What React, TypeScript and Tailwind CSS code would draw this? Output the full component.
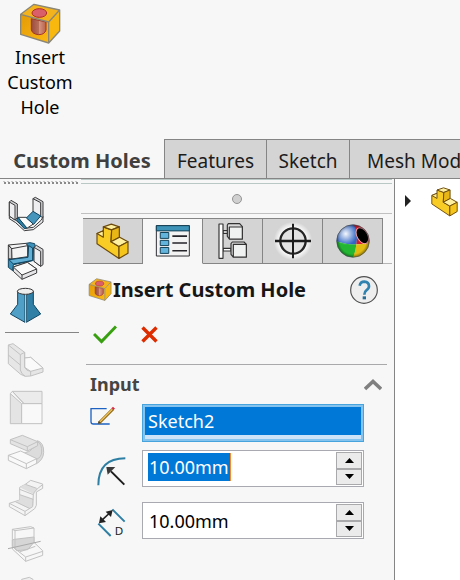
import type { ReactNode } from "react";

function HoleBlock({ className }: { className: string }) {
  return (
    <svg className={className} viewBox="57 9 126 123" aria-hidden="true">
      <defs>
        <linearGradient id="bore" x1="0" x2="1">
          <stop offset="0" stopColor="#9c4a3c" />
          <stop offset="0.5" stopColor="#b8705a" />
          <stop offset="0.5" stopColor="#d89a86" />
          <stop offset="1" stopColor="#b8604c" />
        </linearGradient>
        <linearGradient id="front" x1="0" x2="1" y1="0" y2="1">
          <stop offset="0" stopColor="#e39a06" />
          <stop offset="1" stopColor="#fdb913" />
        </linearGradient>
      </defs>
      <path d="M62 43 102 13 179 30 146 66Z" fill="#f3b31c" />
      <path d="M62 43 146 66V129L62 103Z" fill="url(#front)" />
      <path d="M146 66 179 30V93L146 129Z" fill="#f8b80e" />
      <path d="M94 56 138 66V90Q134 104 116 104 97 102 94 90Z" fill="url(#bore)" stroke="#a3332c" strokeWidth="3" />
      <ellipse cx="118" cy="39" rx="22" ry="13" fill="#d9606a" stroke="#b02a2a" strokeWidth="3" />
      <path d="M62 43 102 13 179 30V93L146 129 62 103ZL146 66 179 30M146 66V129" fill="none" stroke="#8a8678" strokeWidth="4" strokeLinejoin="round" />
    </svg>
  );
}

function PartIcon({ className }: { className: string }) {
  return (
    <svg className={className} viewBox="51 38 99 110" aria-hidden="true">
      <g stroke="#6b4a0c" strokeWidth="3.5" strokeLinejoin="round">
        <path d="M54 69 73 61V49L98 58 96 94 120 108V144L54 100Z" fill="#f9cb25" />
        <path d="M54 69 73 61V80Z" fill="#fff09a" />
        <path d="M73 49 97 41 121 49 98 58Z" fill="#fff0a0" />
        <path d="M98 58 121 49V80L96 94Z" fill="#e8b615" />
        <path d="M96 94 122 80 147 94 120 108Z" fill="#fff0a0" />
        <path d="M120 108 147 94V128L120 144Z" fill="#f6c51c" />
      </g>
    </svg>
  );
}

function PropertiesIcon() {
  return (
    <svg className="h-8 w-9" viewBox="224 44 108 98" aria-hidden="true">
      <path d="M227 46H328V139H227Z" fill="#f3f3f4" stroke="#2c2c30" strokeWidth="3" />
      <path d="M227 46H328V62H227Z" fill="#3e94b8" stroke="#123f55" strokeWidth="3" />
      <g fill="#63b4dc" stroke="#123f55" strokeWidth="3">
        <path d="M239 67H265V85H239ZM239 91H265V107H239ZM239 113H265V131H239Z" />
      </g>
      <path d="M276 78H321M276 99H321M276 123H321" stroke="#26262a" strokeWidth="5" />
    </svg>
  );
}

function ConfigIcon() {
  return (
    <svg className="h-9 w-[29px]" viewBox="415 40 87 108" aria-hidden="true">
      <g stroke="#333" strokeWidth="3.5" strokeLinejoin="round">
        <path d="M430 63H444V71H430ZM430 116H454V124H430Z" fill="#fff" />
        <path d="M418 43H430V146H418Z" fill="#fff" />
        <path d="M443 46 446 42H480L488 51V88H450L443 80Z" fill="#d9d9d9" />
        <path d="M449 52H488V88H449Z" fill="#f0f1f1" />
        <path d="M454 102 458 97H493L500 104V142H461L454 134Z" fill="#d9d9d9" />
        <path d="M461 104H500V142H461Z" fill="#f0f1f1" />
      </g>
    </svg>
  );
}

function TargetIcon() {
  return (
    <svg className="size-10" viewBox="129 31 120 120" aria-hidden="true">
      <defs>
        <radialGradient id="halo">
          <stop offset="0.7" stopColor="#fff" stopOpacity="0.9" />
          <stop offset="1" stopColor="#fff" stopOpacity="0" />
        </radialGradient>
      </defs>
      <circle cx="189" cy="91" r="58" fill="url(#halo)" />
      <circle cx="189" cy="91" r="38" fill="#e3e3e3" stroke="#252525" strokeWidth="7" />
      <path d="M135 91H243" stroke="#1c1c1c" strokeWidth="7" />
      <path d="M189 39V143" stroke="#1c1c1c" strokeWidth="6" />
    </svg>
  );
}

function AppearanceIcon() {
  return (
    <svg className="size-9" viewBox="316 37 108 108" aria-hidden="true">
      <defs>
        <clipPath id="ball">
          <circle cx="370" cy="91" r="49" />
        </clipPath>
        <radialGradient id="shine" cx="0.28" cy="0.28" r="0.35">
          <stop offset="0" stopColor="#fff" stopOpacity="0.95" />
          <stop offset="1" stopColor="#fff" stopOpacity="0" />
        </radialGradient>
        <radialGradient id="rim">
          <stop offset="0.8" stopColor="#000" stopOpacity="0" />
          <stop offset="1" stopColor="#000" stopOpacity="0.4" />
        </radialGradient>
      </defs>
      <g clipPath="url(#ball)">
        <path d="M316 37H374Q386 65 380 101 350 103 316 91Z" fill="#2f65c4" />
        <path d="M370 37H424V100H380Q386 65 370 37Z" fill="#d01c2c" />
        <path d="M316 90Q350 103 380 101 378 124 370 145H316Z" fill="#22b632" />
        <path d="M380 101Q405 101 424 90V145H368Q378 124 380 101Z" fill="#e2bb10" />
        <ellipse cx="398" cy="75" rx="16" ry="26" transform="rotate(-30 398 75)" fill="#000" stroke="#f5a0a8" strokeWidth="3" />
        <circle cx="370" cy="91" r="49" fill="url(#rim)" />
        <circle cx="370" cy="91" r="49" fill="url(#shine)" />
      </g>
      <circle cx="370" cy="91" r="49" fill="none" stroke="#444a50" strokeWidth="2" />
    </svg>
  );
}

type Tool = { label: string; box: string; art: ReactNode };

const activeTools: Tool[] = [
  {
    label: "Sketched bend",
    box: "18 42 120 120",
    art: (
      <g stroke="#3a3a3c" strokeWidth="3" strokeLinejoin="round">
        <path d="M28 108 48 121 75 145 100 142 124 120 129 110V126L100 149 73 152 47 128 28 116Z" fill="#ececee" />
        <path d="M28 66 33 61 52 72V112L46 120 28 108Z" fill="#d4d4d6" />
        <path d="M28 66 45 76V120L28 108Z" fill="#eeeef0" />
        <path d="M99 56 106 52 129 65V112L122 110Z" fill="#d4d4d6" />
        <path d="M99 56 122 68V110L99 96Z" fill="#eeeef0" />
        <path d="M54 112H79L100 132 79 146Z" fill="#fbfbfb" />
        <path d="M54 112 80 143 73 146 50 121Z" fill="#2e7fa6" stroke="#11445f" />
        <path d="M79 114 99 94 122 108 101 133Z" fill="#4595bc" stroke="#11445f" />
      </g>
    ),
  },
  {
    label: "Closed corner",
    box: "18 180 120 120",
    art: (
      <g stroke="#3a3a3c" strokeWidth="3" strokeLinejoin="round">
        <path d="M78 190 90 188 104 191 106 200 100 204 98 242 40 254 38 272 25 262V236L83 228V197Z" fill="#3c91ba" stroke="#11445f" />
        <path d="M25 195 36 206V237L25 236Z" fill="#cfcfd1" />
        <path d="M25 195 78 190 83 197V230L36 237 35 206Z" fill="#f4f4f5" />
        <path d="M25 195 35 206 83 197" fill="none" />
        <path d="M86 197 98 204V241L40 252 27 239 84 232Z" fill="#62b0d6" stroke="#11445f" />
        <path d="M102 202 109 196 129 208V254L122 259 102 244Z" fill="#d6d6d8" />
        <path d="M102 202 122 214V259L102 244Z" fill="#f0f0f2" />
        <path d="M40 261 82 247 110 267V279L66 298 40 274Z" fill="#e6e6e8" />
        <path d="M40 261 82 247 110 267 66 285Z" fill="#fafafa" />
        <path d="M66 285V298" />
      </g>
    ),
  },
  {
    label: "Lofted bend",
    box: "18 318 120 120",
    art: (
      <g stroke="#11445f" strokeWidth="3" strokeLinejoin="round">
        <path d="M53 334V373L31 402 75 427V345Z" fill="#4f9fc6" />
        <path d="M100 334V373L122 402 79 427V345Z" fill="#2f7fa7" />
        <path d="M77 345V428" stroke="#f7f7f7" strokeWidth="2" />
        <ellipse cx="76" cy="334" rx="24" ry="9" fill="#ededed" stroke="#38383a" />
      </g>
    ),
  },
];

const idleTools: Tool[] = [
  {
    label: "Edge flange",
    box: "18 60 120 120",
    art: (
      <>
        <path d="M25 75 39 71 74 97V114L92 112 129 144V156L92 168 76 169 62 163 25 131Z" fill="#e6e6e6" />
        <path d="M74 114 92 112 129 144 92 154 74 142Z" fill="#fafafa" />
        <path d="M25 75 61 104V150Q64 163 76 169M61 104 74 97V142Q80 154 92 154V168M25 105 61 135" fill="none" />
      </>
    ),
  },
  {
    label: "Miter flange",
    box: "18 198 120 120",
    art: (
      <>
        <path d="M31 221 65 251V311H31Z" fill="#e4e4e4" />
        <path d="M37 214H126V251H72Z" fill="#ebebeb" />
        <path d="M65 251H126V311H65Z" fill="#f9f9f9" />
        <path d="M31 221 37 214 72 251" fill="none" />
      </>
    ),
  },
  {
    label: "Hem",
    box: "18 -24 120 120",
    art: (
      <>
        <path d="M112 2Q132 8 131 37 130 60 108 72L66 40Q92 36 96 26L112 16Z" fill="#dcdcdc" />
        <path d="M31 -1 67 -14 113 5V17L82 33 31 11Z" fill="#e3e3e3" />
        <path d="M31 -1 82 20 113 5M82 20V33" fill="none" />
        <path d="M25 46 62 33 110 56V70L79 86 25 61Z" fill="#f9f9f9" />
        <path d="M25 46 79 71 110 56M79 71V86M113 5Q126 12 125 36 124 52 110 58" fill="none" />
      </>
    ),
  },
  {
    label: "Jog",
    box: "18 114 120 120",
    art: (
      <>
        <path d="M28 190 59 180V142L76 133 92 121 128 132V145L109 156V196L104 206 75 227 28 200Z" fill="#f4f4f4" />
        <path d="M59 142 76 133 112 146 100 162Z" fill="#dedede" stroke="none" />
        <path d="M59 164 100 178V196L90 206 46 186 59 180Z" fill="#dedede" stroke="none" />
        <path d="M28 190 75 214 98 200 100 164Q102 152 128 134M75 214V227M59 148 100 164M59 164 100 178M76 133 110 145M46 185 90 206" fill="none" />
      </>
    ),
  },
  {
    label: "Sketched line bend",
    box: "18 252 120 120",
    art: (
      <>
        <path d="M37 268 92 260 102 264V307L128 332V346L77 364 37 327Z" fill="#f7f7f7" />
        <path d="M43 298 102 291V307L83 329 50 332 37 318V300Z" fill="#d6d6d6" />
        <path d="M37 268 45 272 102 264M45 272V326L77 351 128 334M77 351V364M58 336 106 319" fill="none" />
        <path d="M24 326 122 304" fill="none" stroke="#aaa" />
      </>
    ),
  },
  {
    label: "Cross break",
    box: "18 390 120 120",
    art: <path d="M65 418 88 412 99 418V470L65 480Z" fill="#eeeeee" />,
  },
];

function ToolButton({ tool, idle }: { tool: Tool; idle?: boolean }) {
  return (
    <button type="button" aria-label={tool.label} disabled={idle} className="flex h-[46px] w-[52px] shrink-0 items-center justify-center">
      <svg className="size-10" viewBox={tool.box} aria-hidden="true">
        {idle ? (
          <g stroke="#c2c2c2" strokeWidth="3" strokeLinejoin="round">{tool.art}</g>
        ) : (
          tool.art
        )}
      </svg>
    </button>
  );
}

function Spinner({ name }: { name: string }) {
  return (
    <div className="m-px flex w-[26px] shrink-0 flex-col border border-[#a9a9ab]">
      <button type="button" aria-label={`Increase ${name}`} className="flex flex-1 items-center justify-center border-b border-[#a9a9ab] bg-[#ebebeb]">
        <svg className="h-[5px] w-[9px]" viewBox="0 0 9 5" aria-hidden="true"><path d="M4.500 0 9 5H0Z" /></svg>
      </button>
      <button type="button" aria-label={`Decrease ${name}`} className="flex flex-1 items-center justify-center border-t border-[#a9a9ab] bg-[#ebebeb]">
        <svg className="h-[5px] w-[9px]" viewBox="0 0 9 5" aria-hidden="true"><path d="M0 0H9L4.500 5Z" /></svg>
      </button>
    </div>
  );
}

const ribbonTab = "h-full shrink-0 border-t border-l border-[#858585] bg-[#d4d4d4] text-[19px] text-[#1c1c1c]";
const panelTab = "flex w-[60px] items-center justify-center border-y border-r border-[#858585] ";

export default function App() {
  return (
    <div className="flex h-screen flex-col overflow-hidden bg-[#f7f7f7] font-['Noto_Sans','Open_Sans',sans-serif] text-black">
      <header className="h-[139px] shrink-0">
        <button type="button" className="flex w-20 flex-col items-center pt-[3px]">
          <HoleBlock className="h-[41px] w-[42px]" />
          <span className="pt-px text-[18px] leading-[25px]">Insert<br />Custom<br />Hole</span>
        </button>
      </header>

      <nav className="flex h-10 shrink-0 overflow-hidden whitespace-nowrap border-b border-[#858585]">
        <button type="button" className="w-[164px] shrink-0 pt-1 text-[20px] font-bold text-[#404040]">Custom Holes</button>
        <button type="button" className={ribbonTab + " w-[102px] pt-1"}>Features</button>
        <button type="button" className={ribbonTab + " w-[83px] pt-1"}>Sketch</button>
        <button type="button" className={ribbonTab + " grow pt-1 pl-[17px] text-left"}>Mesh Modeling</button>
      </nav>

      <div className="flex min-h-0 flex-1">
        <aside className="flex w-[81px] shrink-0 flex-col overflow-hidden">
          <svg className="mt-0.5 ml-[3px] h-[3px] w-[76px] shrink-0" aria-hidden="true">
            <defs>
              <pattern id="grip" width="4" height="3" patternUnits="userSpaceOnUse">
                <path d="M0 0H2V1H0Z" fill="#c8c8c8" />
                <path d="M1 1H3V3H1Z" fill="#8a8a8a" />
              </pattern>
            </defs>
            <rect width="76" height="3" fill="url(#grip)" />
          </svg>
          <div className="mt-[7px] flex flex-col">
            {activeTools.map((t) => <ToolButton key={t.label} tool={t} />)}
          </div>
          <hr className="mt-[3px] mb-1 ml-[5px] w-[74px] shrink-0 border-[#858585]" />
          <div className="flex flex-col">
            {idleTools.map((t) => <ToolButton key={t.label} tool={t} idle />)}
          </div>
        </aside>

        <main className="w-[314px] shrink-0 border-r border-[#858585]">
          <div className="mr-0.5 h-[5px] border-y border-[#b9c8c5]" />
          <div className="mr-0.5 flex h-[30px] items-center justify-center border-b border-[#c0c0c0]">
            <span className="size-[10px] rounded-full border border-[#949494] bg-[#d0d0d0]" />
          </div>
          <div className="mt-1 flex h-[46px] pl-0.5">
            <button type="button" aria-label="Feature tree" className={panelTab + "bg-[#d4d4d4]"}><PartIcon className="h-[37px] w-[33px]" /></button>
            <button type="button" aria-label="Properties" className={panelTab + "border-b-transparent"}><PropertiesIcon /></button>
            <button type="button" aria-label="Configurations" className={panelTab + "bg-[#d4d4d4]"}><ConfigIcon /></button>
            <button type="button" aria-label="Dimensions" className={panelTab + "bg-[#d4d4d4]"}><TargetIcon /></button>
            <button type="button" aria-label="Appearances" className={panelTab + "bg-[#d4d4d4]"}><AppearanceIcon /></button>
            <span className="mr-0.5 grow border-b border-[#b5b5b5]" />
          </div>

          <div className="flex h-[51px] items-center pr-4 pl-[7px]">
            <HoleBlock className="h-[23px] w-6 shrink-0" />
            <h1 className="ml-px grow whitespace-nowrap text-[20px] font-bold text-[#161616]">Insert Custom Hole</h1>
            <button type="button" aria-label="Help" className="shrink-0">
              <svg className="size-7" viewBox="0 0 84 84" aria-hidden="true">
                <circle cx="42" cy="42" r="40" fill="#eeeeef" stroke="#505050" strokeWidth="3.500" />
                <path d="M29 29Q31 17 43 17 57 18 57 31 57 38 49 43 43 47 43 56" fill="none" stroke="#2f83ae" strokeWidth="8" />
                <path d="M38 61H48V70H38Z" fill="#256d94" />
              </svg>
            </button>
          </div>

          <div className="flex h-[49px] items-start gap-6 pt-[10px] pl-3">
            <button type="button" aria-label="Accept">
              <svg className="h-[19px] w-6" viewBox="0 0 24 19" fill="none" stroke="#38a010" strokeWidth="3" aria-hidden="true"><path d="M1 9 8.500 16.500 23 1.500" /></svg>
            </button>
            <button type="button" aria-label="Cancel">
              <svg className="h-[19px] w-[17px]" viewBox="0 0 17 19" fill="none" stroke="#dd2c00" strokeWidth="3.4" aria-hidden="true"><path d="M1.500 2.500 15.500 16.500M15.500 2.500 1.500 16.500" /></svg>
            </button>
          </div>

          <section className="mr-[7px] ml-[5px] border-t border-[#a9a9ab]">
            <div className="flex h-[39px] items-center justify-between pr-[5px] pl-1">
              <h2 className="text-[18px] font-bold text-[#454545]">Input</h2>
              <button type="button" aria-label="Collapse input">
                <svg className="h-3 w-[18px]" viewBox="0 0 18 12" fill="none" stroke="#808080" strokeWidth="3.500" aria-hidden="true"><path d="M1 10 9 2.500 17 10" /></svg>
              </button>
            </div>

            <div className="flex pr-[23px] pl-1">
              <label htmlFor="sketch" aria-label="Sketch" className="w-[52px] shrink-0 pt-0.5">
                <svg className="h-[19px] w-[25px]" viewBox="28 151 75 57" aria-hidden="true">
                  <path d="M78 159H31V198Q31 205 38 205H87" fill="none" stroke="#1d61c2" strokeWidth="4" />
                  <path d="M55 202 97 160" stroke="#8a6416" strokeWidth="9" />
                  <path d="M58 198 95 161" stroke="#f0c459" strokeWidth="4" />
                  <path d="M93 157 97 153 103 159 98 163Z" fill="#dc2340" />
                  <path d="M51 205 54 197 60 202Z" fill="#4c4434" />
                </svg>
              </label>
              <div className="min-w-0 grow border border-[#48a4dc] bg-[#cde3f8]">
                <div className="border-2 border-[#84c3ee] pb-1">
                  <input id="sketch" readOnly value="Sketch2" className="block h-7 w-full bg-[#0078d7] px-[3px] text-[18px] text-white outline-none" />
                </div>
              </div>
            </div>

            <div className="mt-2 flex pr-[23px] pl-1">
              <label htmlFor="radius" aria-label="Radius" className="w-[52px] shrink-0 pt-[7px] pl-[7px]">
                <svg className="h-[29px] w-[29px]" viewBox="50 304 87 87" fill="none" aria-hidden="true">
                  <path d="M54 389Q54 308 135 308" stroke="#2e7fa4" strokeWidth="6" />
                  <path d="M132 387 92 347" stroke="#1c1c1c" strokeWidth="6" />
                  <path d="M78 334H105L82 357Z" fill="#3a3a3a" />
                </svg>
              </label>
              <div className="flex h-[37px] min-w-0 grow border border-[#a9a9b1] bg-white pl-[5px]">
                <input id="radius" defaultValue="10.00mm" className="mt-0.5 h-7 w-[83px] border-r border-[#ff8728] bg-[#0078d7] px-px text-[18px] text-white outline-none" />
                <span className="grow" />
                <Spinner name="radius" />
              </div>
            </div>

            <div className="mt-[15px] flex pr-[23px] pl-1">
              <label htmlFor="depth" aria-label="Depth" className="w-[52px] shrink-0 pt-[6px] pl-[7px]">
                <svg className="h-[29px] w-[29px]" viewBox="50 460 87 87" fill="none" aria-hidden="true">
                  <path d="M96 464 133 501M54 507 91 544" stroke="#2e7fa4" strokeWidth="6" />
                  <path d="M64 497 88 475" stroke="#222" strokeWidth="5" />
                  <path d="M56 506 60 485 77 502ZM97 466 92 487 76 471Z" fill="#222" />
                  <text x="103" y="540" fontSize="35" fontFamily="Noto Sans, Open Sans, sans-serif" fill="#222">D</text>
                </svg>
              </label>
              <div className="flex h-[37px] min-w-0 grow border border-[#a9a9b1] bg-white pl-[5px]">
                <input id="depth" defaultValue="10.00mm" className="h-full w-0 min-w-0 grow px-px text-[18px] outline-none" />
                <Spinner name="depth" />
              </div>
            </div>
          </section>
        </main>

        <div className="flex min-w-0 grow items-start bg-white pt-2 pl-[10px]">
          <button type="button" aria-label="Expand part" className="mt-2">
            <svg className="h-3 w-[6px]" viewBox="0 0 6 12" aria-hidden="true"><path d="M0 0 6 6 0 12Z" fill="#222" /></svg>
          </button>
          <PartIcon className="ml-5 h-[30px] w-[27px] shrink-0" />
        </div>
      </div>
    </div>
  );
}
